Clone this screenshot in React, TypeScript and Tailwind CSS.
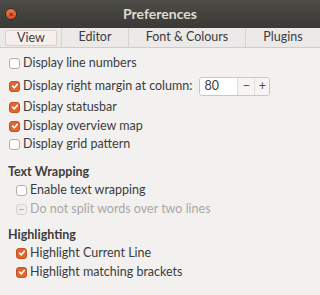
import React from 'react'

function Check({ checked, disabled }: { checked?: boolean; disabled?: boolean }) {
  if (checked) {
    return (
      <span className="w-[11px] h-[11px] rounded-[3px] bg-[#e0652f] border border-[#c5531f] flex items-center justify-center shrink-0">
        <svg width="8" height="8" viewBox="0 0 10 10">
          <path d="M2 5.2 L4.2 7.3 L8 2.8" fill="none" stroke="#fff" strokeWidth="2" strokeLinecap="round" strokeLinejoin="round" />
        </svg>
      </span>
    )
  }
  return (
    <span
      className={`w-[11px] h-[11px] rounded-[3px] border flex items-center justify-center shrink-0 ${
        disabled ? 'border-[#d6d4d0] bg-[#efeeec]' : 'border-[#b3b0ab] bg-white'
      }`}
    >
      {disabled && <span className="w-[5px] h-[1px] bg-[#b8b5b0]" />}
    </span>
  )
}

function Row({ label, checked, disabled, className = '' }: { label: string; checked?: boolean; disabled?: boolean; className?: string }) {
  return (
    <div className={`h-[18px] flex items-center gap-[3px] ${className}`}>
      <Check checked={checked} disabled={disabled} />
      <span className={disabled ? 'text-[#a9a7a3]' : 'text-[#3c3c3c]'}>{label}</span>
    </div>
  )
}

export default function App() {
  return (
    <div
      className="w-[320px] h-[295px] bg-[#f2f1f0] overflow-hidden text-[12.5px] leading-none"
      style={{ fontFamily: 'Lato, "Noto Sans", sans-serif' }}
    >
      {/* title bar */}
      <div className="h-[28px] bg-gradient-to-b from-[#4d4c47] to-[#3a3935] flex items-center relative">
        <span className="absolute left-[5px] top-[8px] w-[12px] h-[12px] rounded-full bg-gradient-to-b from-[#f0774a] to-[#d4532a] border border-[#2f2e2b] flex items-center justify-center">
          <span className="text-[8px] text-[#5a2010] font-bold leading-none">×</span>
        </span>
        <div className="flex-1 text-center font-bold text-[14px] text-[#dfdbd2]">Preferences</div>
      </div>

      {/* tabs */}
      <div className="h-[20px] flex items-stretch bg-[#ebeae8] border-b border-[#cfcdca] pl-[5px] text-[#3c3c3c]">
        <div className="w-[52px] mt-[2px] mb-[1px] flex items-center justify-center bg-[#f7efec] border border-[#dccfca] rounded-[2px]">View</div>
        <div className="w-[5px] border-r border-[#d6d4d1]" />
        <div className="w-[67px] flex items-center justify-center border-r border-[#d6d4d1]">Editor</div>
        <div className="w-[117px] flex items-center justify-center border-r border-[#d6d4d1]">Font &amp; Colours</div>
        <div className="flex-1 flex items-center justify-center">Plugins</div>
      </div>

      <div className="pl-[9px] pt-[6px] flex flex-col">
        <Row label="Display line numbers" />
        <div className="h-[20px] flex items-center mt-[4px]">
          <Row label="Display right margin at column:" checked />
          <div className="ml-[7px] h-[19px] w-[71px] flex border border-[#c9c7c3] rounded-[3px] bg-white overflow-hidden">
            <div className="w-[37px] flex items-center pl-[4px] text-[#3c3c3c]">80</div>
            <div className="w-[17px] flex items-center justify-center border-l border-[#e0dedb] bg-[#f6f5f4] text-[#4a4a4a]">−</div>
            <div className="flex-1 flex items-center justify-center border-l border-[#e0dedb] bg-[#f6f5f4] text-[#4a4a4a]">+</div>
          </div>
        </div>
        <Row label="Display statusbar" checked className="mt-[2px]" />
        <Row label="Display overview map" checked className="mt-[1px]" />
        <Row label="Display grid pattern" />
      </div>

      <div className="h-[18px] flex items-center pl-[8px] mt-[10px] font-bold text-[#3c3c3c]">Text Wrapping</div>
      <div className="pl-[16px] flex flex-col">
        <Row label="Enable text wrapping" />
        <Row label="Do not split words over two lines" disabled className="mt-[1px]" />
      </div>

      <div className="h-[18px] flex items-center pl-[8px] mt-[8px] font-bold text-[#3c3c3c]">Highlighting</div>
      <div className="pl-[16px] flex flex-col">
        <Row label="Highlight Current Line" checked />
        <Row label="Highlight matching brackets" checked className="mt-[1px]" />
      </div>
    </div>
  )
}
